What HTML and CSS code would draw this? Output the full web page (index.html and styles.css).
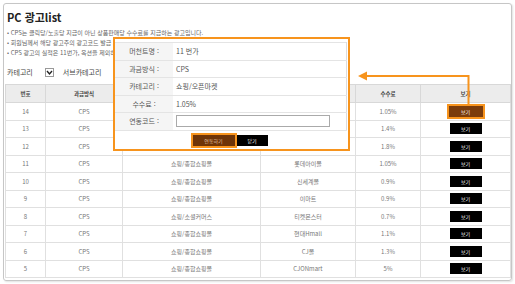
FILE: index.html
```html
<!DOCTYPE html>
<html lang="ko">
<head>
  <meta charset="UTF-8" />
  <title>PC 광고list</title>
  <link rel="stylesheet" href="styles.css">
</head>
<body>
  <div class="frame">
    <h1 class="title">PC 광고list</h1>
    <ul class="notes">
      <li>• CPS는 클릭당/노출당 지급이 아닌 상품판매당 수수료를 지급하는 광고입니다.</li>
      <li>• 회원님께서 해당 광고주의 광고코드 발급 후 사이트에 연동하시면 됩니다.</li>
      <li>• CPS 광고의 실적은 11번가, 옥션을 제외하고 구매확정 후 반영됩니다.</li>
    </ul>

    <div class="filters">
      <span class="select">카테고리
        <span class="select-arrow">
          <svg width="7" height="7" viewBox="0 0 7 7"><path d="M1 2 L3.5 5 L6 2" fill="none" stroke="#222" stroke-width="1.4"/></svg>
        </span>
      </span>
      <span class="select">서브카테고리</span>
    </div>

    <table class="ad-table">
      <colgroup>
        <col style="width:40px">
        <col style="width:77px">
        <col style="width:138px">
        <col style="width:95px">
        <col style="width:65px">
        <col style="width:90px">
      </colgroup>
      <thead>
        <tr><th>번호</th><th>과금방식</th><th>카테고리</th><th>광고주</th><th>수수료</th><th>보기</th></tr>
      </thead>
      <tbody>
        <tr><td>14</td><td>CPS</td><td>쇼핑/오픈마켓</td><td>11번가</td><td>1.05%</td><td><span class="view-btn active">보기</span></td></tr>
        <tr><td>13</td><td>CPS</td><td>쇼핑/오픈마켓</td><td>옥션</td><td>1.4%</td><td><span class="view-btn">보기</span></td></tr>
        <tr><td>12</td><td>CPS</td><td>쇼핑/종합쇼핑몰</td><td>지마켓</td><td>1.8%</td><td><span class="view-btn">보기</span></td></tr>
        <tr><td>11</td><td>CPS</td><td>쇼핑/종합쇼핑몰</td><td>롯데아이몰</td><td>1.05%</td><td><span class="view-btn">보기</span></td></tr>
        <tr><td>10</td><td>CPS</td><td>쇼핑/종합쇼핑몰</td><td>신세계몰</td><td>0.9%</td><td><span class="view-btn">보기</span></td></tr>
        <tr><td>9</td><td>CPS</td><td>쇼핑/종합쇼핑몰</td><td>이마트</td><td>0.9%</td><td><span class="view-btn">보기</span></td></tr>
        <tr><td>8</td><td>CPS</td><td>쇼핑/소셜커머스</td><td>티켓몬스터</td><td>0.7%</td><td><span class="view-btn">보기</span></td></tr>
        <tr><td>7</td><td>CPS</td><td>쇼핑/종합쇼핑몰</td><td>현대Hmall</td><td>1.1%</td><td><span class="view-btn">보기</span></td></tr>
        <tr><td>6</td><td>CPS</td><td>쇼핑/종합쇼핑몰</td><td>CJ몰</td><td>1.3%</td><td><span class="view-btn">보기</span></td></tr>
        <tr><td>5</td><td>CPS</td><td>쇼핑/종합쇼핑몰</td><td>CJONmart</td><td>5%</td><td><span class="view-btn">보기</span></td></tr>
      </tbody>
    </table>

    <!-- popup opened from the first row -->
    <div class="popup">
      <table class="popup-form">
        <tr><th>머천트명 :</th><td>11 번가</td></tr>
        <tr><th>과금방식 :</th><td>CPS</td></tr>
        <tr><th>카테고리 :</th><td>쇼핑/오픈마켓</td></tr>
        <tr><th>수수료 :</th><td>1.05%</td></tr>
        <tr><th>연동코드 :</th><td><span class="code-input"></span></td></tr>
      </table>
      <div class="popup-buttons">
        <span class="btn-link">연동하기</span>
        <span class="btn-close">닫기</span>
      </div>
    </div>

    <svg class="pointer" width="515" height="284" viewBox="0 0 515 284">
      <path d="M468.5 105 V76 H366" fill="none" stroke="#f7941d" stroke-width="2"/>
      <polygon points="358,76 367,71.5 367,80.5" fill="#f7941d"/>
    </svg>
  </div>
</body>
</html>
```

FILE: styles.css
```css
* {
  margin: 0;
  padding: 0;
  box-sizing: border-box;
  font-family: "Noto Sans CJK KR", "Noto Sans", sans-serif;
}

body {
  background-color: #ffffff;
  color: #555;
}

.frame {
  position: relative;
  margin: 3px;
  width: 509px;
  height: 278px;
  border: 1px solid #c6c6c6;
  border-radius: 3px;
  box-shadow: 1px 1px 2px rgba(0, 0, 0, 0.12);
}

.title {
  padding: 6px 0 0 3px;
  font-size: 11px;
  line-height: 14px;
  font-weight: 700;
  color: #222;
}

.notes {
  list-style: none;
  margin-top: 4px;
  padding-left: 3px;
  font-size: 6px;
  line-height: 10px;
  color: #666;
}

.filters {
  display: flex;
  align-items: center;
  gap: 9px;
  height: 12px;
  margin-top: 8px;
  padding-left: 3px;
  font-size: 7px;
  color: #444;
}

.select {
  display: flex;
  align-items: center;
  gap: 12px;
}

.select-arrow {
  display: flex;
  align-items: center;
  justify-content: center;
  width: 9px;
  height: 9px;
  border: 1px solid #999;
}

.ad-table {
  width: 505px;
  margin: 6px 0 0 1px;
  border-collapse: collapse;
  table-layout: fixed;
  font-size: 6px;
  color: #777;
  text-align: center;
}

.ad-table th,
.ad-table td {
  border: 1px solid #e0e0e0;
  font-weight: 400;
  padding: 0;
}

.ad-table th {
  height: 18px;
  background: #ececec;
  border-color: #d8d8d8;
  font-size: 5.5px;
  font-weight: 700;
  color: #444;
}

.ad-table td {
  height: 17.5px;
}

.view-btn {
  display: inline-flex;
  align-items: center;
  justify-content: center;
  width: 32px;
  height: 11px;
  background: #000;
  color: #fff;
  font-size: 5px;
  vertical-align: middle;
}

.view-btn.active {
  width: 38px;
  height: 15px;
  background: #7b3c0b;
  border: 2px solid #f7941d;
}

.popup {
  position: absolute;
  left: 109px;
  top: 33px;
  width: 237px;
  height: 114px;
  border: 2px solid #f7941d;
  background: #fff;
  padding: 3px 1px 0 0;
}

.popup-form {
  width: 100%;
  border-collapse: collapse;
  font-size: 7px;
  color: #555;
}

.popup-form th,
.popup-form td {
  height: 17.5px;
  border-top: 1px solid #e4e4e4;
  border-bottom: 1px solid #e4e4e4;
}

.popup-form th {
  width: 58px;
  background: #f5f5f5;
  font-weight: 400;
  text-align: center;
}

.popup-form td {
  padding-left: 3px;
  border-right: 1px solid #dcdcdc;
}

.code-input {
  display: block;
  width: 154px;
  height: 12px;
  border: 1px solid #aaa;
  background: #fff;
}

.popup-buttons {
  display: flex;
  justify-content: center;
  align-items: center;
  height: 19px;
  padding-right: 4px;
}

.btn-link {
  display: flex;
  align-items: center;
  justify-content: center;
  width: 46px;
  height: 15px;
  background: #6e3407;
  border: 2px solid #f7941d;
  color: #e5c6a6;
  font-size: 5px;
}

.btn-close {
  display: flex;
  align-items: center;
  justify-content: center;
  width: 31px;
  height: 11px;
  background: #000;
  color: #fff;
  font-size: 5px;
}

.pointer {
  position: absolute;
  left: -4px;
  top: -4px;
  pointer-events: none;
}
```
